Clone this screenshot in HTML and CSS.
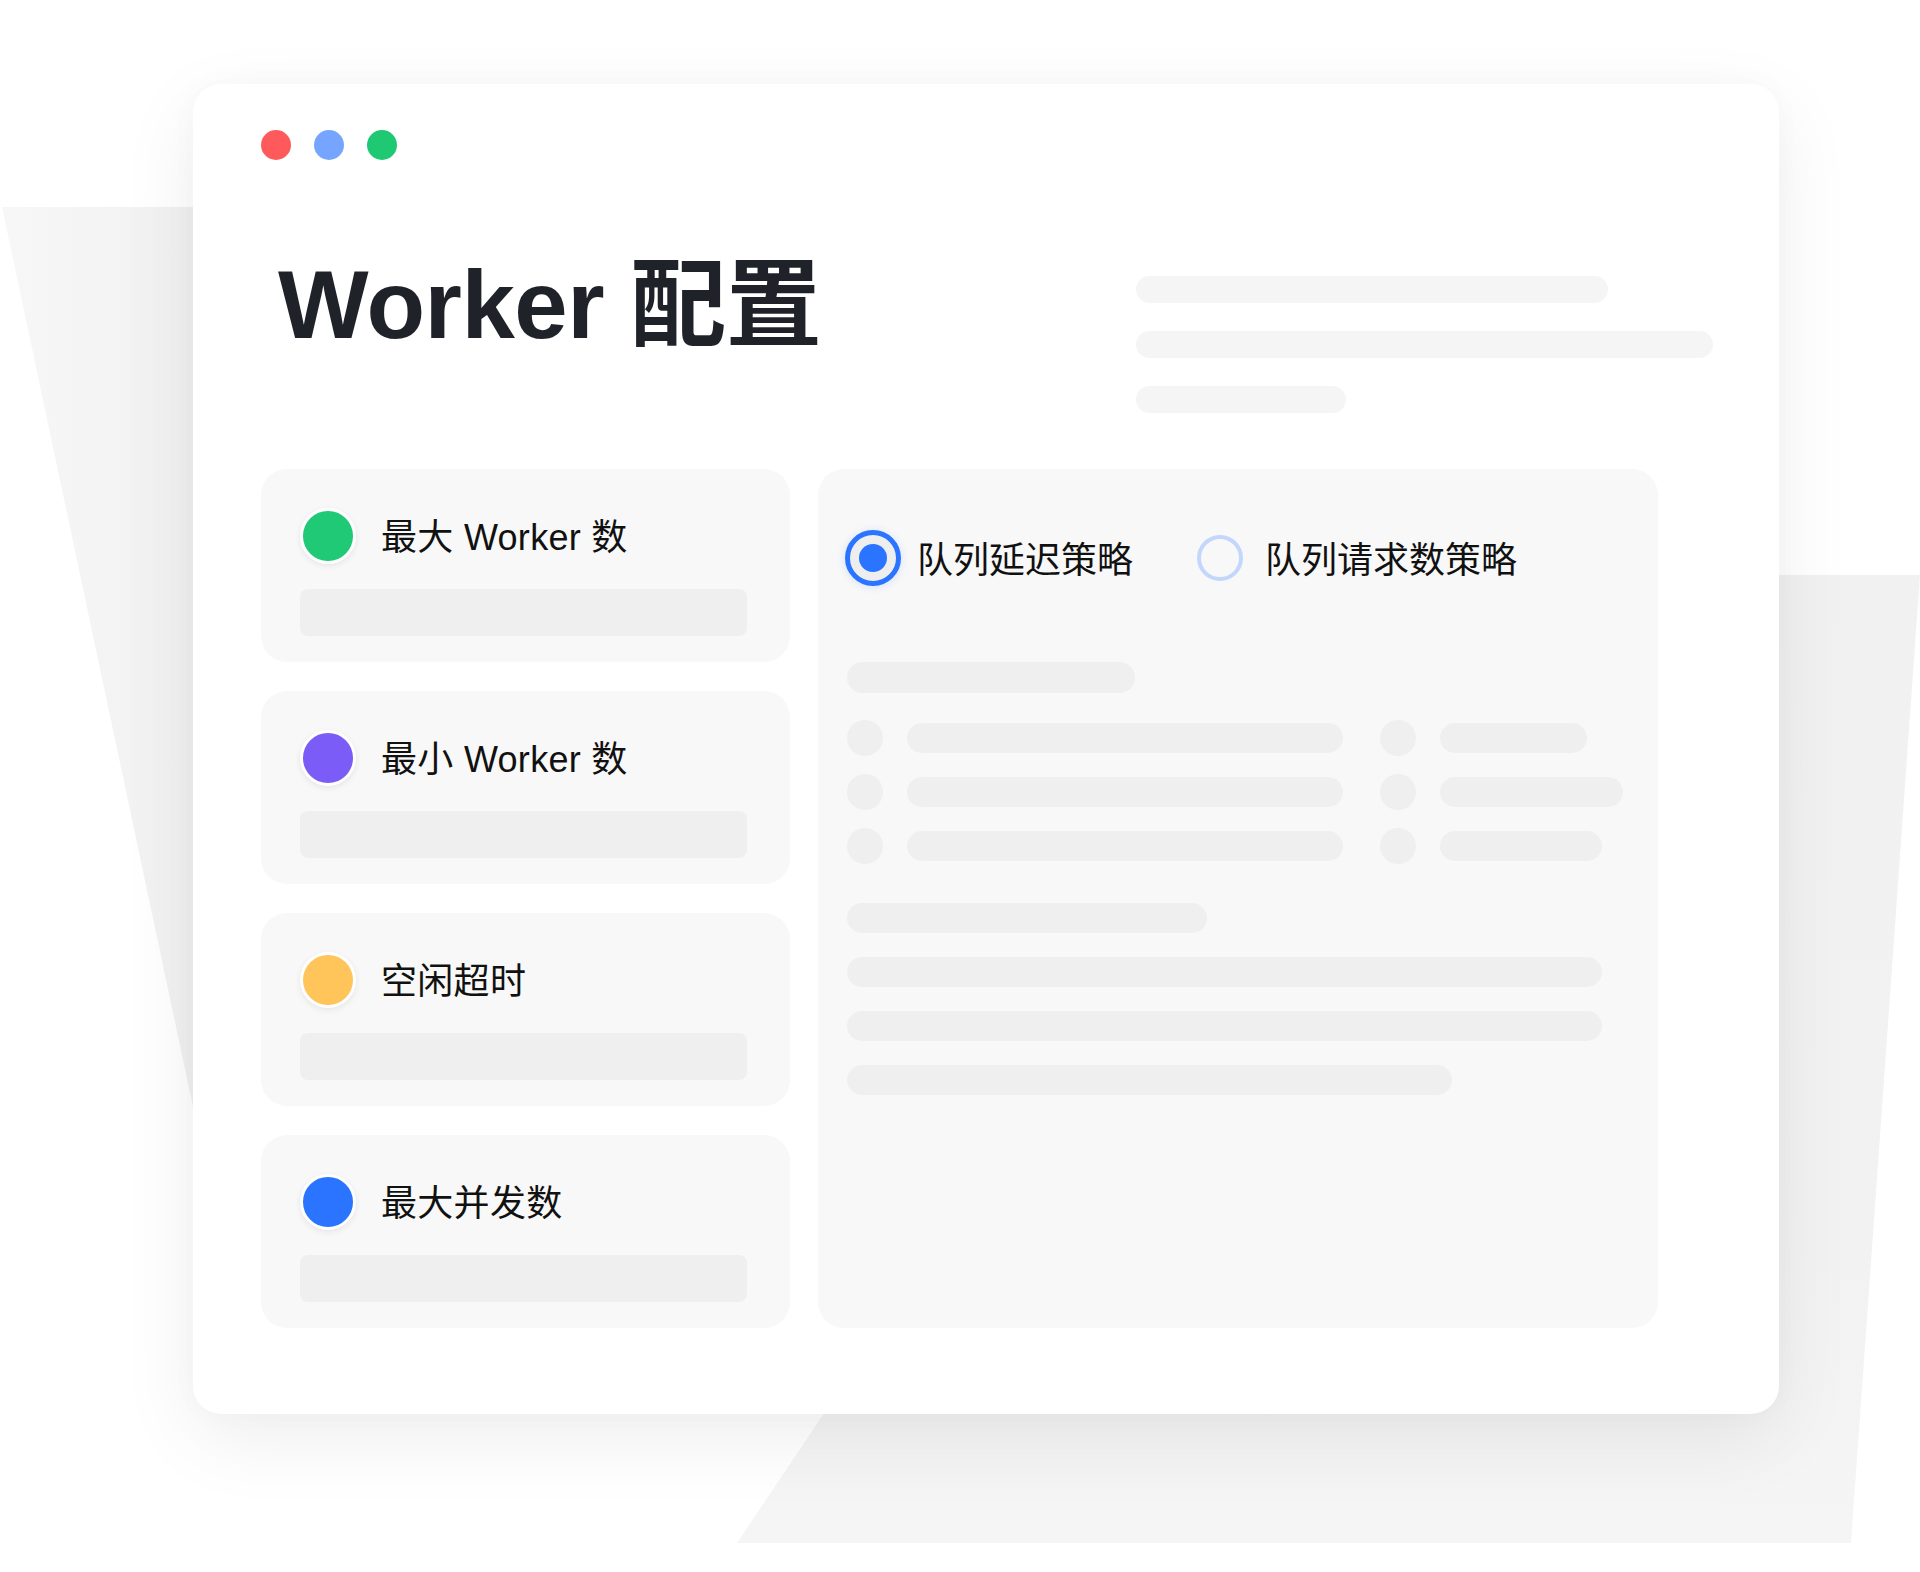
FILE: index.html
```html
<!DOCTYPE html>
<html lang="zh-CN">
<head>
<meta charset="utf-8">
<title>Worker 配置</title>
<link rel="stylesheet" href="styles.css">
</head>
<body>
<div class="stage">
  <svg class="bg" width="1920" height="1572" viewBox="0 0 1920 1572" aria-hidden="true">
    <defs>
      <linearGradient id="ga" x1="0" y1="0" x2="1" y2="0">
        <stop offset="0" stop-color="#f7f7f7"/>
        <stop offset="0.2" stop-color="#f1f1f1"/>
        <stop offset="1" stop-color="#f1f1f1"/>
      </linearGradient>
      <linearGradient id="gb" x1="0" y1="0" x2="0" y2="1">
        <stop offset="0" stop-color="#f1f1f1"/>
        <stop offset="0.7" stop-color="#f2f2f2"/>
        <stop offset="1" stop-color="#f5f5f5"/>
      </linearGradient>
    </defs>
    <polygon points="2,207 900,207 900,1380 251,1380" fill="url(#ga)"/>
    <polygon points="1700,575 1920,575 1851,1543 737,1543 900,1300 1700,1300" fill="url(#gb)"/>
  </svg>

  <div class="window">
    <div class="dots">
      <span class="dot red"></span>
      <span class="dot blue"></span>
      <span class="dot green"></span>
    </div>

    <div class="header">
      <h1 class="title">Worker 配置</h1>
      <div class="lines">
        <div class="line l1"></div>
        <div class="line l2"></div>
        <div class="line l3"></div>
      </div>
    </div>

    <div class="main">
      <div class="cards">
        <div class="card">
          <div class="card-head"><span class="badge c-green"></span><span class="label">最大 Worker 数</span></div>
          <div class="field"></div>
        </div>
        <div class="card">
          <div class="card-head"><span class="badge c-purple"></span><span class="label">最小 Worker 数</span></div>
          <div class="field"></div>
        </div>
        <div class="card">
          <div class="card-head"><span class="badge c-yellow"></span><span class="label">空闲超时</span></div>
          <div class="field"></div>
        </div>
        <div class="card">
          <div class="card-head"><span class="badge c-blue"></span><span class="label">最大并发数</span></div>
          <div class="field"></div>
        </div>
      </div>

      <div class="panel">
        <div class="radios">
          <div class="option">
            <span class="radio checked"><span class="radio-dot"></span></span>
            <span class="opt-label">队列延迟策略</span>
          </div>
          <div class="option">
            <span class="radio"></span>
            <span class="opt-label">队列请求数策略</span>
          </div>
        </div>

        <div class="sk sk-head"></div>

        <div class="rows">
          <div class="row">
            <span class="sk-dot"></span><span class="sk sk-mid"></span>
            <span class="sk-dot"></span><span class="sk sk-end" style="width:147px"></span>
          </div>
          <div class="row">
            <span class="sk-dot"></span><span class="sk sk-mid"></span>
            <span class="sk-dot"></span><span class="sk sk-end" style="width:183px"></span>
          </div>
          <div class="row">
            <span class="sk-dot"></span><span class="sk sk-mid"></span>
            <span class="sk-dot"></span><span class="sk sk-end" style="width:162px"></span>
          </div>
        </div>

        <div class="paras">
          <div class="sk sk-p" style="width:360px"></div>
          <div class="sk sk-p" style="width:755px"></div>
          <div class="sk sk-p" style="width:755px"></div>
          <div class="sk sk-p" style="width:605px"></div>
        </div>
      </div>
    </div>
  </div>
</div>
</body>
</html>
```

FILE: styles.css
```css
html, body {
  margin: 0;
  padding: 0;
  background: #ffffff;
}

body {
  width: 1920px;
  height: 1572px;
  overflow: hidden;
  font-family: "Liberation Sans", "Noto Sans CJK SC", sans-serif;
  color: #111111;
}

.stage {
  position: relative;
  width: 1920px;
  height: 1572px;
  box-sizing: border-box;
  padding: 84px 0 0 193px;
}

.bg {
  position: absolute;
  left: 0;
  top: 0;
  z-index: 0;
}

.window {
  position: relative;
  z-index: 1;
  width: 1586px;
  height: 1330px;
  box-sizing: border-box;
  padding: 46px 66px 87px 68px;
  background: #ffffff;
  border-radius: 28px;
  box-shadow: 0 24px 80px rgba(0, 0, 0, 0.07), 0 0 30px rgba(0, 0, 0, 0.025);
}

/* traffic lights */
.dots {
  display: flex;
  gap: 23px;
  height: 30px;
}

.dot {
  width: 30px;
  height: 30px;
  border-radius: 50%;
}

.red { background: #ff5a5b; }
.blue { background: #75a5ff; }
.green { background: #1fc973; }

/* header */
.header {
  display: flex;
  align-items: flex-start;
  margin-top: 92px;
}

.title {
  margin: 5px 0 0 17px;
  font-size: 96px;
  line-height: 96px;
  font-weight: 700;
  color: #1f2329;
  letter-spacing: -0.5px;
  white-space: nowrap;
}

.lines {
  margin-left: auto;
  width: 577px;
  padding-top: 24px;
  display: flex;
  flex-direction: column;
  gap: 28px;
}

.line {
  height: 27px;
  border-radius: 14px;
  background: #f5f5f5;
}

.l1 { width: 472px; }
.l2 { width: 577px; }
.l3 { width: 210px; }

/* main area */
.main {
  display: grid;
  grid-template-columns: 529px 840px;
  column-gap: 28px;
  margin-top: 56px;
  height: 858px;
}

.cards {
  display: flex;
  flex-direction: column;
  gap: 29px;
}

.card {
  height: 193px;
  box-sizing: border-box;
  padding: 39px 44px 26px 39px;
  background: #f8f8f8;
  border-radius: 26px;
}

.card-head {
  display: flex;
  align-items: center;
  gap: 25px;
  height: 56px;
}

.badge {
  width: 56px;
  height: 56px;
  box-sizing: border-box;
  border-radius: 50%;
  border: 3px solid #ffffff;
  box-shadow: 0 2px 6px rgba(0, 0, 0, 0.08);
  flex: none;
}

.c-green { background: #20c975; }
.c-purple { background: #7b5cf6; }
.c-yellow { background: #ffc55a; }
.c-blue { background: #2b74ff; }

.label {
  font-size: 36px;
  line-height: 56px;
  padding-top: 4px;
  color: #111111;
  white-space: nowrap;
  letter-spacing: 0.3px;
}

.field {
  margin-top: 25px;
  width: 447px;
  height: 47px;
  border-radius: 8px;
  background: #efefef;
}

/* right panel */
.panel {
  background: #f8f8f8;
  border-radius: 26px;
  padding: 61px 29px 0 27px;
}

.radios {
  display: flex;
  align-items: center;
  gap: 64px;
  height: 56px;
}

.option {
  display: flex;
  align-items: center;
  gap: 16px;
}

.option + .option {
  gap: 22px;
}

.radio {
  width: 46px;
  height: 46px;
  box-sizing: border-box;
  border-radius: 50%;
  border: 4px solid #c3d7fc;
  display: flex;
  align-items: center;
  justify-content: center;
  flex: none;
}

.radio.checked {
  width: 56px;
  height: 56px;
  border: 5px solid #2b74ff;
  background: #eeeeee;
  box-shadow: 0 1px 8px rgba(43, 116, 255, 0.18);
}

.radio-dot {
  width: 28px;
  height: 28px;
  border-radius: 50%;
  background: #2b74ff;
}

.opt-label {
  font-size: 36px;
  line-height: 56px;
  padding-top: 5px;
  color: #111111;
  white-space: nowrap;
}

.sk {
  display: block;
  background: #efefef;
  border-radius: 16px;
}

.sk-head {
  margin: 76px 0 0 2px;
  width: 288px;
  height: 31px;
}

.rows {
  margin: 27px 0 0 2px;
  display: flex;
  flex-direction: column;
  gap: 18px;
}

.row {
  display: flex;
  align-items: center;
  height: 36px;
}

.sk-dot {
  width: 36px;
  height: 36px;
  border-radius: 50%;
  background: #efefef;
  flex: none;
}

.sk-mid {
  width: 436px;
  height: 30px;
  margin: 0 37px 0 24px;
}

.sk-end {
  height: 30px;
  margin-left: 24px;
}

.paras {
  margin: 39px 0 0 2px;
  display: flex;
  flex-direction: column;
  gap: 24px;
}

.sk-p {
  height: 30px;
}
```
